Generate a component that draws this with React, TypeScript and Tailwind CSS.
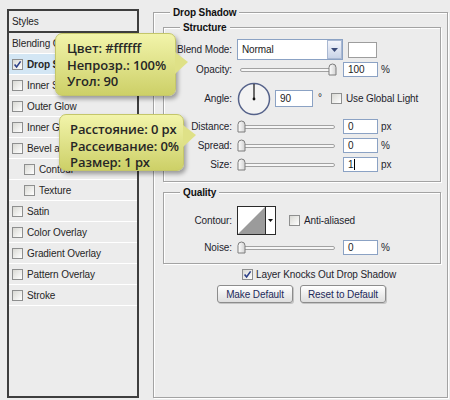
import React from 'react';

const ink = 'text-[#1e1e2c]';

function Check({ checked = false }: { checked?: boolean }) {
  return (
    <span className="relative inline-block w-[11px] h-[11px] shrink-0 border border-[#8e8f8f] bg-linear-to-br from-[#d9d9d4] to-white">
      {checked && (
        <svg viewBox="0 0 11 11" className="absolute -left-px -top-px w-[11px] h-[11px]">
          <path d="M2.6 5.4 L4.6 8 L8.6 2.4" fill="none" stroke="#2b3f88" strokeWidth="1.6" />
        </svg>
      )}
    </span>
  );
}

function Thumb() {
  return (
    <svg viewBox="0 0 9 13" className="w-[9px] h-[13px]">
      <defs>
        <linearGradient id="th" x1="0" y1="0" x2="1" y2="0">
          <stop offset="0" stopColor="#ffffff" />
          <stop offset="1" stopColor="#d2d2d2" />
        </linearGradient>
      </defs>
      <path d="M1 4.5 Q1 1 4.5 1 Q8 1 8 4.5 V12 H1 Z" fill="url(#th)" stroke="#7c7c7c" />
    </svg>
  );
}

function Slider({ width, end = false }: { width: string; end?: boolean }) {
  return (
    <div className={'relative h-[15px] ' + width}>
      <div className="absolute left-0 right-0 top-[6px] h-[4px] rounded-[2px] border border-[#a2a2a2] bg-[#f6f6f6]" />
      <div className={'absolute top-[1px] ' + (end ? 'right-[-2px]' : 'left-[-1px]')}>
        <Thumb />
      </div>
    </div>
  );
}

function Num({ value, w = 'w-[35px]', h = 'h-[15px]', cursor = false }: { value: string; w?: string; h?: string; cursor?: boolean }) {
  return (
    <div className={'flex items-center border border-[#8ba2c4] bg-white pl-[4px] text-[#222] ' + w + ' ' + h}>
      {value}
      {cursor && <span className="ml-px inline-block w-px h-[11px] bg-black" />}
    </div>
  );
}

function Label({ children }: { children: React.ReactNode }) {
  return <div className={'w-[68px] shrink-0 text-right ' + ink}>{children}</div>;
}

function Legend({ children, left }: { children: React.ReactNode; left: string }) {
  return (
    <span className={'absolute -top-[8px] bg-[#ececec] px-[3px] font-bold text-[#111] ' + left}>{children}</span>
  );
}

type Item = { label: string; checked?: boolean; sub?: boolean; active?: boolean; plain?: boolean };

const items: Item[] = [
  { label: 'Blending Options: Default', plain: true },
  { label: 'Drop Shadow', checked: true, active: true },
  { label: 'Inner Shadow' },
  { label: 'Outer Glow' },
  { label: 'Inner Glow' },
  { label: 'Bevel and Emboss' },
  { label: 'Contour', sub: true },
  { label: 'Texture', sub: true },
  { label: 'Satin' },
  { label: 'Color Overlay' },
  { label: 'Gradient Overlay' },
  { label: 'Pattern Overlay' },
  { label: 'Stroke' },
];

function Tooltip({ lines, className, arrowTop }: { lines: string[]; className: string; arrowTop: string }) {
  return (
    <div
      className={
        "absolute rounded-[7px] border border-[#c4c66a] bg-linear-to-b from-[#f2f4aa] to-[#cdd067] shadow-[2px_3px_4px_rgba(0,0,0,0.35)] font-['Open_Sans',sans-serif] font-semibold text-[13px] leading-[16.5px] text-[#262626] " +
        className
      }
    >
      {lines.map((l) => (
        <div key={l} className="whitespace-nowrap">{l}</div>
      ))}
      <svg viewBox="0 0 14 22" className={'absolute left-full w-[14px] h-[22px] ' + arrowTop}>
        <path d="M0 0 L13 10 L0 22 Z" fill="#dfe187" />
      </svg>
    </div>
  );
}

export default function App() {
  return (
    <div className="relative flex w-[450px] h-[400px] overflow-hidden bg-[#ececec] font-['Liberation_Sans',Arial,sans-serif] text-[10px] tracking-[-0.1px]">
      {/* styles list */}
      <div className="ml-[7px] mt-[9px] w-[132px] h-[389px] shrink-0 flex flex-col border-2 border-[#3e3e3e]">
        <div className="h-[22px] shrink-0 flex items-center pl-[3px] border-b-2 border-[#3e3e3e] text-[#222]">Styles</div>
        {items.map((it) => (
          <div
            key={it.label}
            className={
              'h-[21px] shrink-0 flex items-center gap-[4px] border-b border-white text-[#262626] ' +
              (it.sub ? 'pl-[15px] ' : 'pl-[3px] ') +
              (it.active ? 'bg-[#d3e6f4] font-bold' : '')
            }
          >
            {!it.plain && <Check checked={it.checked} />}
            <span className="whitespace-nowrap">{it.label}</span>
          </div>
        ))}
      </div>

      {/* drop shadow settings */}
      <div className="relative ml-[14px] mt-[12px] w-[295px] h-[386px] shrink-0 border border-[#a3a3a3] shadow-[inset_1px_1px_0_#fff,1px_1px_0_#fff] pl-[9px] pt-[14px]">
        <Legend left="left-[16px]">Drop Shadow</Legend>

        <div className="relative w-[278px] h-[155px] border border-[#a3a3a3] shadow-[inset_1px_1px_0_#fff,1px_1px_0_#fff] pt-[11px]">
          <Legend left="left-[16px]">Structure</Legend>

          <div className="flex items-center h-[21px]">
            <Label>Blend Mode:</Label>
            <div className="ml-[5px] flex w-[106px] h-[21px] border border-[#8ba2c4] bg-white">
              <div className="flex-1 flex items-center pl-[4px] text-[#222]">Normal</div>
              <div className="w-[15px] flex items-center justify-center border border-[#a9b8d2] bg-linear-to-b from-[#f3f5fb] to-[#c9d4e8]">
                <svg viewBox="0 0 7 4" className="w-[7px] h-[4px]">
                  <path d="M0 0 H7 L3.5 4 Z" fill="#3a4a78" />
                </svg>
              </div>
            </div>
            <div className="ml-[5px] w-[29px] h-[16px] border border-[#9d9d9d] bg-white" />
          </div>

          <div className="flex items-center h-[15px] mt-[2px]">
            <Label>Opacity:</Label>
            <div className="ml-[8px]">
              <Slider width="w-[95px]" end />
            </div>
            <div className="ml-[8px]"><Num value="100" /></div>
            <span className={'ml-[3px] ' + ink}>%</span>
          </div>

          <div className="flex items-center h-[33px] mt-[5px]">
            <Label>Angle:</Label>
            <svg viewBox="0 0 34 34" className="ml-[5px] w-[34px] h-[34px]">
              <circle cx="17" cy="17" r="15.5" fill="#f3f3f3" stroke="#55628a" strokeWidth="1.5" />
              <line x1="17" y1="17" x2="17" y2="2" stroke="#111" strokeWidth="1.2" />
              <circle cx="17" cy="17" r="1.4" fill="#111" />
            </svg>
            <div className="ml-[4px]"><Num value="90" w="w-[38px]" h="h-[17px]" /></div>
            <span className={'ml-[5px] self-start mt-[8px] ' + ink}>°</span>
            <div className="ml-[9px] flex items-center gap-[4px]">
              <Check />
              <span className={ink}>Use Global Light</span>
            </div>
          </div>

          {[
            ['Distance:', '0', 'px'],
            ['Spread:', '0', '%'],
            ['Size:', '1', 'px'],
          ].map(([l, v, u]) => (
            <div key={l} className="flex items-center h-[15px] mt-[4px]">
              <Label>{l}</Label>
              <div className="ml-[6px]">
                <Slider width="w-[97px]" />
              </div>
              <div className="ml-[8px]"><Num value={v} cursor={l === 'Size:'} /></div>
              <span className={'ml-[3px] ' + ink}>{u}</span>
            </div>
          ))}
        </div>

        <div className="relative mt-[10px] w-[278px] h-[72px] border border-[#a3a3a3] shadow-[inset_1px_1px_0_#fff,1px_1px_0_#fff] pt-[13px]">
          <Legend left="left-[16px]">Quality</Legend>

          <div className="flex items-center h-[29px]">
            <Label>Contour:</Label>
            <svg viewBox="0 0 39 29" className="ml-[5px] w-[39px] h-[29px]">
              <rect x="0.5" y="0.5" width="38" height="28" fill="#fff" stroke="#2a2a2a" />
              <path d="M1 28 L28 1 V28 Z" fill="#9b9b9b" />
              <line x1="28.5" y1="0.5" x2="28.5" y2="28.5" stroke="#2a2a2a" />
              <path d="M31 13 H36 L33.5 16 Z" fill="#111" />
            </svg>
            <div className="ml-[13px] flex items-center gap-[4px]">
              <Check />
              <span className={ink}>Anti-aliased</span>
            </div>
          </div>

          <div className="flex items-center h-[15px] mt-[5px]">
            <Label>Noise:</Label>
            <div className="ml-[6px]">
              <Slider width="w-[97px]" />
            </div>
            <div className="ml-[8px]"><Num value="0" /></div>
            <span className={'ml-[3px] ' + ink}>%</span>
          </div>
        </div>

        <div className="flex items-center gap-[3px] h-[13px] mt-[4px] ml-[79px]">
          <Check checked />
          <span className={ink}>Layer Knocks Out Drop Shadow</span>
        </div>

        <div className="flex gap-[7px] mt-[4px] ml-[54px]">
          {[
            ['Make Default', 'w-[76px]'],
            ['Reset to Default', 'w-[86px]'],
          ].map(([t, w]) => (
            <div
              key={t}
              className={
                'h-[18px] flex items-center justify-center rounded-[3px] border border-[#8c8c8c] bg-linear-to-b from-white to-[#dedede] shadow-[1px_1px_0_#c4c4c4] text-[#1d2a5a] ' +
                w
              }
            >
              {t}
            </div>
          ))}
        </div>
      </div>

      <Tooltip
        lines={['Цвет: #ffffff', 'Непрозр.: 100%', 'Угол: 90']}
        className="left-[55px] top-[33px] w-[121px] h-[63px] pl-[11px] pt-[6px]"
        arrowTop="top-[18px]"
      />
      <Tooltip
        lines={['Расстояние: 0 px', 'Рассеивание: 0%', 'Размер: 1 px']}
        className="left-[59px] top-[114px] w-[125px] h-[57px] pl-[10px] pt-[6px]"
        arrowTop="top-[10px]"
      />
    </div>
  );
}
